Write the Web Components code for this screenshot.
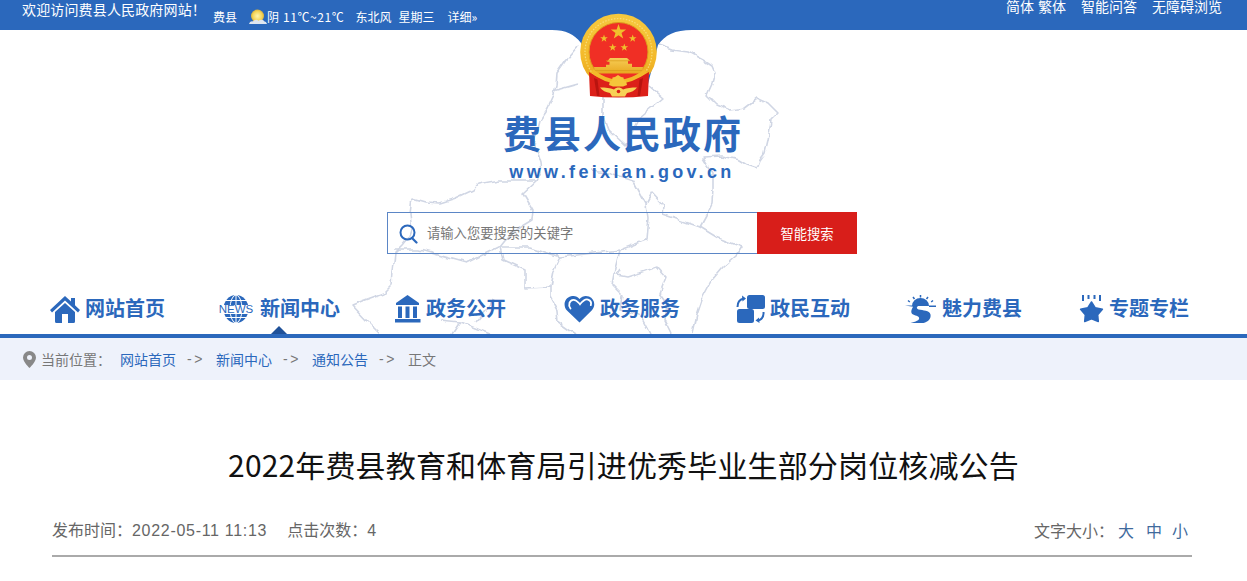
<!DOCTYPE html>
<html lang="zh-CN">
<head>
<meta charset="utf-8">
<title>费县人民政府</title>
<style>
  html, body { margin: 0; padding: 0; background: #fff; overflow: hidden; }
  body { font-family: "Liberation Sans", "Noto Sans CJK SC", sans-serif; }
</style>
</head>
<body>
<gov-masthead>
  <gov-topbar></gov-topbar>
  <gov-brand></gov-brand>
  <gov-search></gov-search>
  <gov-nav>
    <gov-nav-item>
      <svg slot="icon" width="30" height="28" viewBox="0 0 30 28"><path fill="#2b68bc" d="M15 1 0 15l2 2.400L15 5.500 28 17.400 30 15l-5-4.700V3h-4v3.600zM15 8 5 17v9.500a1.500 1.500 0 0 0 1.500 1.500H12v-9h6v9h5.500a1.500 1.500 0 0 0 1.500-1.500V17z"/></svg>
      网站首页
    </gov-nav-item>
    <gov-nav-item active style="margin-left:52px">
      <gov-news-icon slot="icon"></gov-news-icon>
      新闻中心
    </gov-nav-item>
    <gov-nav-item style="margin-left:54px">
      <svg slot="icon" width="27" height="28" viewBox="0 0 27 28"><path fill="#2b68bc" d="M13.500 0 25 8v2H2V8zM4 11.500h4V23H4zM11.500 11.500h4V23h-4zM19 11.500h4V23h-4zM1 24h25.500v3.500H1z"/></svg>
      政务公开
    </gov-nav-item>
    <gov-nav-item style="margin-left:58px">
      <svg slot="icon" width="31" height="28" viewBox="0 0 31 28"><path fill="#2b68bc" d="M15.500 27.500 3 15.500C-1.500 10.500.5 3 7 1.300c3.600-.9 6.600.3 8.500 2.700C18 1.200 21.500.2 25 1.600c5.600 2.300 7 9 2.900 13.700z"/><path fill="none" stroke="#fff" stroke-width="1.800" stroke-linecap="round" d="M6.500 13.500C3.800 10 5.500 5 9.500 4.800c3-.1 4.500 2.300 6.500 4.500 2.400-3 5-5.700 8-4.700 2.500.8 3.500 3.200 2.800 5.600"/></svg>
      政务服务
    </gov-nav-item>
    <gov-nav-item style="margin-left:56px">
      <svg slot="icon" width="29" height="28" viewBox="0 0 29 28"><rect x="11" y="0" width="18" height="14" rx="2.500" fill="#2b68bc"/><rect x="1" y="14" width="17" height="14" rx="2.500" fill="#2b68bc"/><path fill="none" stroke="#2b68bc" stroke-width="2" d="M1.500 12C1.500 7 3.500 4.500 7.500 3.500"/><path fill="#2b68bc" d="M6 .5 10 3.500 6.500 6.500z"/><path fill="none" stroke="#2b68bc" stroke-width="2" d="M27.500 17c.5 5-2 7.500-5.500 8.500"/><path fill="#2b68bc" d="M23 22.500 19.500 25.500 23.500 28z"/></svg>
      政民互动
    </gov-nav-item>
    <gov-nav-item style="margin-left:55px">
      <svg slot="icon" width="32" height="28" viewBox="0 0 32 28"><path fill="#2b68bc" d="M7 11a8.500 8 0 0 1 17 0zM0 10.500h14c-2.500 1-3 3-.5 4 4.500 1 11 .8 12 5 .8 4-2.500 7.500-7 8.500H5.500c5-1.500 9.500-2.500 8.500-5.500-1-2.500-6-1.500-7.500-4.500-.6-1.800.2-4 1.500-6.200z"/><path fill="#2b68bc" d="M24 10.500h7v1.500h-7z"/><path stroke="#2b68bc" stroke-width="1.500" d="M15.500 0v2.500M8 2 9.500 4M23 2 21.500 4M3 5.500 4.800 7M28 5.500 26.200 7"/></svg>
      魅力费县
    </gov-nav-item>
    <gov-nav-item style="margin-left:57px">
      <svg slot="icon" width="25" height="28" viewBox="0 0 25 28"><path fill="#2b68bc" stroke="#2b68bc" stroke-width="1.500" stroke-linejoin="round" d="M12.500 7 16.300 12.800 23.400 14.300 18.700 19.700 19.300 26.500 12.500 23.800 5.700 26.500 6.300 19.700 1.600 14.300 8.700 12.800z"/><path stroke="#2b68bc" stroke-width="2" d="M4 0v6M9.500 0v4M15.500 0v4M21 0v6"/></svg>
      专题专栏
    </gov-nav-item>
  </gov-nav>
</gov-masthead>
<gov-crumbs></gov-crumbs>
<gov-article-head
  heading="2022年费县教育和体育局引进优秀毕业生部分岗位核减公告"
  published="2022-05-11 11:13"
  hits="4"></gov-article-head>

<script>
class GovMasthead extends HTMLElement {
  constructor() {
    super();
    this.shadowDOM = this.attachShadow({ mode: 'open' });
    this.shadowDOM.innerHTML = `
      <style>
        :host { display: block; position: relative; height: 338px; }
        .map { position: absolute; left: 0; top: 0; z-index: 0; }
        .map g { fill: none; stroke: #d0d6e4; stroke-width: 1.600; stroke-linejoin: round; }
        .content { position: relative; z-index: 1; height: 338px; display: flex; flex-direction: column; }
        .emblem { position: absolute; left: 540px; top: 0; z-index: 2; }
      </style>
      <svg class="map" width="1247" height="338" viewBox="0 0 1247 338">
        <defs>
          <filter id="wobble" x="-5%" y="-5%" width="110%" height="110%">
            <feTurbulence type="fractalNoise" baseFrequency=".09" numOctaves="2" seed="4"/>
            <feDisplacementMap in="SourceGraphic" scale="6" xChannelSelector="R" yChannelSelector="G"/>
          </filter>
        </defs>
        <g filter="url(#wobble)">
          <path d="M380 334 368 322 352 305 362 301 373 297 384 293 392 285 393 272 395 253 402 246 410 236 412 230 410 214 412 198 426 202 440 203 456 198 473 190 478 184 500 180 520 180 537 180 541 172 540 163 535 147 537 132 540 120 548 108 553 97 556 86 557 73 566 60 578 46"/>
          <path d="M658 45 673 50 688 52 703 60 712 66 715 73 712 84 707 95 716 104 730 110 744 108 757 98 768 103 778 113 771 120 770 128 768 140 765 153 760 160 757 168 748 165 740 160 722 156 703 157 708 165 713 173 713 188 712 203 706 216 700 227 718 238 742 247 736 256 723 267 712 280 703 297 697 315 693 333"/>
          <path d="M537 180 523 193 533 210 532 220 512 232 500 247 503 260 525 270 525 288 550 287 550 297 557 310 558 322 575 334"/>
          <path d="M394 250 420 250 467 263 500 247 530 247 560 257 620 250 646 240 648 218 646 204 652 193 663 205 662 214 700 227"/>
          <path d="M646 204 633 180 607 172 590 170"/>
          <path d="M560 257 553 272 550 287"/>
          <path d="M620 250 615 270 612 285 622 295 620 310 640 315 650 334"/>
          <path d="M620 270 617 275 627 277 640 273 657 267 666 277 660 293 667 303 665 320 672 334"/>
          <path d="M553 91 578 84"/>
          <path d="M603 97 603 117 608 130 625 146 640 117 663 98 650 87"/>
          <path d="M440 320 460 322 490 334 M494 300 476 322 M460 322 452 334"/>
        </g>
      </svg>
      <div class="content"><slot></slot></div>
      <svg class="emblem" width="160" height="100" viewBox="540 0 160 100">
        <defs>
          <linearGradient id="ring" x1="0" y1="0" x2="0" y2="1">
            <stop offset="0" stop-color="#f6c93f"/><stop offset=".6" stop-color="#f3b92a"/><stop offset="1" stop-color="#e39b17"/>
          </linearGradient>
          <linearGradient id="gate" x1="0" y1="0" x2="0" y2="1">
            <stop offset="0" stop-color="#f6cd57"/><stop offset="1" stop-color="#e8a81f"/>
          </linearGradient>
          <path id="s" d="M0-1 .235-.324 .951-.309 .38.124 .588.809 0 .4-.588.809-.38.124-.951-.309-.235-.324z"/>
        </defs>
        <path fill="#2b68bc" d="M552 30C566 30 574 34 581 43L592 84H648L658 45C665 35 675 30 692 30z"/>
        <circle cx="618.500" cy="52" r="38.300" fill="url(#ring)"/>
        <circle cx="618.500" cy="52" r="33.500" fill="none" stroke="#f9dd77" stroke-width="1.200" stroke-dasharray="1.500 1.500"/>
        <circle cx="618.500" cy="52" r="29.500" fill="#f02f25" stroke="#dd9e1d" stroke-width="1"/>
        <g fill="#f0bf2c">
          <use href="#s" transform="translate(618.500 32) scale(8)"/>
          <use href="#s" transform="translate(604 38.500) scale(4)"/>
          <use href="#s" transform="translate(632.700 38.500) scale(4)"/>
          <use href="#s" transform="translate(612.700 47.500) scale(4)"/>
          <use href="#s" transform="translate(624.300 47.500) scale(4)"/>
        </g>
        <path fill="url(#gate)" d="M610 58h17l3 2.800h-2v3h4V67H606v-2.200h3.500v-3h-2.500zM594 67h49l-1 6.500H595z"/>
        <path fill="none" stroke="#d99a1a" stroke-width=".7" d="M606 60.800h24M595 70.500h47"/>
        <path fill="#dc2019" d="M589 72Q618 92 649 72L648 96Q618 99 590 96z"/>
        <path fill="#b9140f" d="M594 78l3 18h2.500l-2-16.500zM643 78l-3 18h-2.500l2-16.500z"/>
        <path fill="none" stroke="#f3b92a" stroke-width="4" d="M592 71Q618 92 646 71"/>
        <path fill="#f5c53a" d="M609 85l1-4 2-.5.5-3 2.500-.5 3-2 3 2 2.500.5.500 3 2 .5 1 4-4 1.500h-10z"/>
        <path fill="#f7d256" d="M600 87.500c6 0 10 .5 14 2 1.500-1.500 3-2 4.500-2s3 .5 4.500 2c4-1.500 8-2 14-2-2 3-6 5-10 5.500l-2 3.500h-13l-2-3.500c-4-.5-8-2.500-10-5.500z"/>
        <circle cx="618.500" cy="91.500" r="1.800" fill="#dc2019"/>
      </svg>
    `;
  }
}

class GovTopbar extends HTMLElement {
  constructor() {
    super();
    this.shadowDOM = this.attachShadow({ mode: 'open' });
    this.shadowDOM.innerHTML = `
      <style>
        :host {
          display: flex; height: 30px; background: #2b68bc; color: #fff;
          font-family: "Noto Sans CJK SC", "Liberation Sans", sans-serif;
          padding: 0 25px 0 22px; box-sizing: border-box; white-space: nowrap;
        }
        .welcome { font-size: 14px; line-height: 18px; width: 191px; flex: none; letter-spacing: .15px; }
        .weather { display: flex; align-items: center; font-size: 12px; line-height: 17px; height: 17px; margin-top: 8px; }
        .weather svg { margin-left: 12px; }
        .weather .temp { letter-spacing: .6px; }
        .weather .wind { margin-left: 11px; }
        .weather .day { margin-left: 7px; }
        .weather .more { margin-left: 13px; }
        .tools {
          margin-left: auto; display: flex; gap: 15px; font-size: 14px; line-height: 15px;
          font-family: "Liberation Sans", "Noto Sans CJK SC", sans-serif; height: 15px;
        }
        .tools .lang { display: flex; gap: 4px; }
      </style>
      <div class="welcome">欢迎访问费县人民政府网站！</div>
      <div class="weather">
        <span>费县</span>
        <svg width="18" height="16" viewBox="0 0 18 16">
          <defs><radialGradient id="sun"><stop offset="0" stop-color="#fff6b0"/><stop offset=".7" stop-color="#f5d55a"/><stop offset="1" stop-color="#d9b23c"/></radialGradient></defs>
          <circle cx="8.500" cy="7" r="6.500" fill="url(#sun)"/>
          <path fill="#dfe6f0" d="M0 15c1-3 3-3 4-2.500 1-2 4-2.500 5.500-.8 2-1.500 5-1 6 .8 1 0 2 .8 2.500 2.500z"/>
        </svg>
        <span class="temp">阴 11℃~21℃</span>
        <span class="wind">东北风</span>
        <span class="day">星期三</span>
        <span class="more">详细»</span>
      </div>
      <div class="tools">
        <div class="lang"><span>简体</span><span>繁体</span></div>
        <span>智能问答</span>
        <span>无障碍浏览</span>
      </div>
    `;
  }
}

class GovBrand extends HTMLElement {
  constructor() {
    super();
    this.shadowDOM = this.attachShadow({ mode: 'open' });
    this.shadowDOM.innerHTML = `
      <style>
        :host { display: block; text-align: center; color: #2b68bc; padding-top: 79px; margin-left: -3px; }
        h1 {
          margin: 0; font: 700 38px/46px "Noto Sans CJK SC", sans-serif; letter-spacing: 2px;
          padding-left: 2px;
        }
        p {
          margin: 7px 0 0; font: 700 18px/21px "Liberation Sans", sans-serif; letter-spacing: 3.350px;
        }
      </style>
      <h1>费县人民政府</h1>
      <p>www.feixian.gov.cn</p>
    `;
  }
}

class GovSearch extends HTMLElement {
  constructor() {
    super();
    this.shadowDOM = this.attachShadow({ mode: 'open' });
    this.shadowDOM.innerHTML = `
      <style>
        :host {
          display: flex; width: 470px; height: 42px; margin: 29px 0 0 387px;
          font-family: "Noto Sans CJK SC", sans-serif; font-size: 13.300px;
        }
        .box {
          flex: 1; box-sizing: border-box; border: 1px solid #5b86c6; border-right: 0;
          display: flex; align-items: center; padding: 0 0 1px 11px; color: #777;
        }
        .box svg { margin: 2px 9px 0 0; }
        button {
          width: 100px; border: 0; padding: 0; background: #d81e1a; color: #fff;
          font: inherit;
        }
      </style>
      <div class="box">
        <svg width="19" height="20" viewBox="0 0 19 20"><circle cx="8.500" cy="8.500" r="7" fill="none" stroke="#2b68bc" stroke-width="2"/><path d="M13 14l4.500 4.500" stroke="#2b68bc" stroke-width="2.200" stroke-linecap="round"/></svg>
        <span>请输入您要搜索的关键字</span>
      </div>
      <button type="button">智能搜索</button>
    `;
  }
}

class GovNav extends HTMLElement {
  constructor() {
    super();
    this.shadowDOM = this.attachShadow({ mode: 'open' });
    this.shadowDOM.innerHTML = `
      <style>
        :host {
          display: flex; align-items: flex-end;
          margin-top: auto; height: 44px;
          padding: 0 0 0 50px; border-bottom: 4px solid #2b68bc;
        }
      </style>
      <slot></slot>
    `;
  }
}

class GovNavItem extends HTMLElement {
  constructor() {
    super();
    this.shadowDOM = this.attachShadow({ mode: 'open' });
    this.shadowDOM.innerHTML = `
      <style>
        :host {
          display: flex; align-items: center; gap: 5px; height: 44px; position: relative;
          color: #2b68bc; font: 700 20px/28px "Noto Sans CJK SC", sans-serif; white-space: nowrap;
        }
        ::slotted(svg) { display: block; margin-top: -7px; }
        ::slotted(gov-news-icon) { margin-top: -7px; }
        .label { display: block; margin-top: -9px; }
        :host([active])::after {
          content: ""; position: absolute; left: 50%; bottom: 0; margin-left: -8px;
          border: 8px solid transparent; border-top: 0; border-bottom-color: #1f5199;
        }
      </style>
      <slot name="icon"></slot>
      <span class="label"><slot></slot></span>
    `;
  }
}

class GovNewsIcon extends HTMLElement {
  constructor() {
    super();
    this.shadowDOM = this.attachShadow({ mode: 'open' });
    this.shadowDOM.innerHTML = `
      <style>
        :host { display: block; position: relative; width: 38px; height: 28px; }
        svg { display: block; position: absolute; left: 6px; top: 0; }
        span {
          position: absolute; left: 0; right: 0; top: 10px; text-align: center;
          font: 400 11.500px/9px "Liberation Sans", sans-serif; color: #2b68bc; background: #fff;
        }
      </style>
      <svg width="26" height="28" viewBox="0 0 26 28">
        <ellipse cx="13" cy="14" rx="12.500" ry="14" fill="#2b68bc"/>
        <g fill="none" stroke="#fff" stroke-width="1">
          <ellipse cx="13" cy="14" rx="6" ry="14"/>
          <path d="M13 0v28M2 5.500h22M2 22.500h22"/>
        </g>
      </svg>
      <span>NEWS</span>
    `;
  }
}

class GovCrumbs extends HTMLElement {
  constructor() {
    super();
    this.shadowDOM = this.attachShadow({ mode: 'open' });
    const trail = [['网站首页', true], ['新闻中心', true], ['通知公告', true], ['正文', false]];
    const links = trail.map(([name, link], i) => `
      ${i ? '<span class="arrow">-&gt;</span>' : ''}
      <span class="${link ? 'link' : ''}">${name}</span>`).join('');
    this.shadowDOM.innerHTML = `
      <style>
        :host {
          display: flex; align-items: center; height: 42px; background: #eef2fb; color: #777;
          font: 14px/20px "Noto Sans CJK SC", sans-serif; padding-left: 23px; white-space: nowrap;
        }
        svg { margin-right: 5px; }
        .here { width: 79px; }
        .link { color: #2b68bc; }
        .arrow { width: 40px; text-align: center; font-family: "Liberation Sans", sans-serif; letter-spacing: 2.500px; }
      </style>
      <svg width="13" height="17" viewBox="0 0 13 17"><path fill-rule="evenodd" fill="#888" d="M6.500 0A6.500 6.500 0 0 0 0 6.500C0 11 6.500 17 6.500 17S13 11 13 6.500A6.500 6.500 0 0 0 6.500 0zm0 4a2.500 2.500 0 1 1 0 5 2.500 2.500 0 0 1 0-5z"/></svg>
      <span class="here">当前位置：</span>
      ${links}
    `;
  }
}

class GovArticleHead extends HTMLElement {
  constructor() {
    super();
    this.shadowDOM = this.attachShadow({ mode: 'open' });
  }

  connectedCallback() {
    this.shadowDOM.innerHTML = `
      <style>
        :host { display: block; padding: 62px 55px 0 52px; color: #666; font-family: "Noto Sans CJK SC", sans-serif; }
        h2 { margin: 0; text-align: center; color: #111; font-weight: 400; font-size: 30px; line-height: 44px; padding-left: 3px; letter-spacing: .15px; }
        .meta {
          display: flex; align-items: center; margin-top: 31px; height: 26px; padding-bottom: 12px;
          border-bottom: 2px solid #aaa; font-size: 16px; line-height: 26px; white-space: nowrap;
        }
        .hits { margin-left: 20px; }
        .size { margin-left: auto; display: flex; padding-right: 4px; }
        .size span { margin-left: 12px; color: #3f6a9c; width: 16px; }
        .size .big { margin-left: 4px; }
        .size .small { margin-left: 10px; }
        .num { font-family: "Liberation Sans", sans-serif; letter-spacing: .7px; }
      </style>
      <h2>${this.getAttribute('heading')}</h2>
      <div class="meta">
        <div>发布时间：<span class="num">${this.getAttribute('published')}</span></div>
        <div class="hits">点击次数：<span class="num">${this.getAttribute('hits')}</span></div>
        <div class="size">文字大小：<span class="big">大</span><span>中</span><span class="small">小</span></div>
      </div>
    `;
  }
}

customElements.define('gov-masthead', GovMasthead);
customElements.define('gov-topbar', GovTopbar);
customElements.define('gov-brand', GovBrand);
customElements.define('gov-search', GovSearch);
customElements.define('gov-nav', GovNav);
customElements.define('gov-nav-item', GovNavItem);
customElements.define('gov-news-icon', GovNewsIcon);
customElements.define('gov-crumbs', GovCrumbs);
customElements.define('gov-article-head', GovArticleHead);
</script>
</body>
</html>
